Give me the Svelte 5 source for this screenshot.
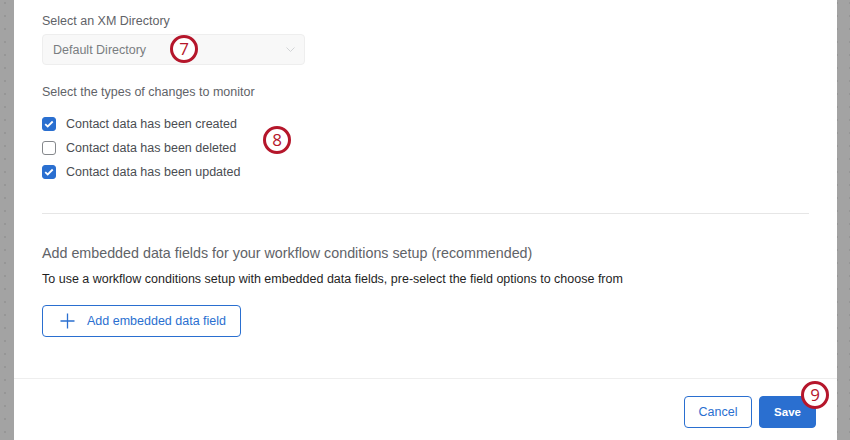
<script>
	let types = [
		{ label: 'Contact data has been created', checked: true },
		{ label: 'Contact data has been deleted', checked: false },
		{ label: 'Contact data has been updated', checked: true }
	];
</script>

<div class="backdrop">
	<div class="modal">
		<div class="modal__main">
			<label class="field-label" for="directory">Select an XM Directory</label>
			<div class="select" id="directory">
				<span>Default Directory</span>
				<svg width="9" height="6" viewBox="0 0 9 6" fill="none" stroke="#d2d4d6" stroke-width="1">
					<path d="M0.5 0.5l4 4 4-4" />
				</svg>
				<span class="step step--seven">7</span>
			</div>

			<p class="field-label field-label--types">Select the types of changes to monitor</p>
			<div class="checks">
				{#each types as type}
					<div class="check">
						<span class="box" class:box--on={type.checked}>
							{#if type.checked}
								<svg width="10" height="8" viewBox="0 0 10 8" fill="none" stroke="#fff" stroke-width="1.8">
									<path d="M1.2 4.2l2.5 2.3 5-5" />
								</svg>
							{/if}
						</span>
						{type.label}
					</div>
				{/each}
				<span class="step step--eight">8</span>
			</div>

			<hr />

			<h2>Add embedded data fields for your workflow conditions setup (recommended)</h2>
			<p class="hint">To use a workflow conditions setup with embedded data fields, pre-select the field options to choose from</p>
			<button class="btn btn--outline btn--add">
				<svg class="plus" width="15" height="16" viewBox="0 0 15 16" fill="none" stroke="#2a6fd0" stroke-width="1.3">
					<path d="M7.5 0.5v15M0.5 8h14" />
				</svg>
				Add embedded data field
			</button>
		</div>
		<div class="modal__footer">
			<button class="btn btn--outline">Cancel</button>
			<button class="btn btn--primary">
				Save
				<span class="step step--nine">9</span>
			</button>
		</div>
	</div>
</div>

<style>
	:global(body) {
		margin: 0;
	}

	.backdrop {
		width: 850px;
		height: 440px;
		overflow: hidden;
		padding: 0 13px 0 14px;
		box-sizing: border-box;
		background-color: #a3a3a3;
		background-image: radial-gradient(circle at 5px 3px, #969696 1px, transparent 1.2px);
		background-size: 13px 13px;
		font-family: 'Liberation Sans', Arial, sans-serif;
		font-size: 12.5px;
	}

	.modal {
		height: 100%;
		background: #fff;
		display: flex;
		flex-direction: column;
	}

	.modal__main {
		flex: 1;
		padding: 15px 28px 0;
	}

	.modal__footer {
		height: 62px;
		box-sizing: border-box;
		border-top: 1px solid #eeeeee;
		padding: 17px 21px 0 0;
		display: flex;
		justify-content: flex-end;
		gap: 7px;
	}

	.field-label {
		display: block;
		margin: 0;
		height: 13px;
		line-height: 13px;
		color: #5f6368;
	}

	.field-label--types {
		margin-top: 21px;
	}

	.select {
		position: relative;
		margin-top: 6px;
		width: 263px;
		height: 31px;
		box-sizing: border-box;
		padding: 0 9px 0 10px;
		display: flex;
		align-items: center;
		justify-content: space-between;
		background: #f8f8f8;
		border: 1px solid #eeeeee;
		border-radius: 4px;
		color: #7a7d81;
	}

	.checks {
		position: relative;
		margin-top: 18px;
		display: flex;
		flex-direction: column;
		gap: 10px;
	}

	.check {
		display: flex;
		align-items: center;
		gap: 10px;
		height: 14px;
		color: #4a4d52;
	}

	.box {
		width: 14px;
		height: 14px;
		box-sizing: border-box;
		border: 1px solid #85888c;
		border-radius: 3px;
		display: flex;
		align-items: center;
		justify-content: center;
	}

	.box--on {
		background: #2a6fd0;
		border-color: #2a6fd0;
	}

	hr {
		margin: 34px 0 0;
		border: 0;
		border-top: 1px solid #e6e6e6;
	}

	h2 {
		margin: 31px 0 0;
		font-size: 14.3px;
		line-height: 16px;
		font-weight: 400;
		color: #5f6368;
	}

	.hint {
		margin: 11px 0 0;
		line-height: 14px;
		color: #1f1f1f;
	}

	.btn {
		position: relative;
		height: 32px;
		box-sizing: border-box;
		border-radius: 4px;
		font: inherit;
		display: flex;
		align-items: center;
		justify-content: center;
		padding: 0;
	}

	.btn--outline {
		width: 68px;
		background: #fff;
		border: 1px solid #2a6fd0;
		color: #2a6fd0;
	}

	.btn--primary {
		width: 57px;
		background: #2a6fd0;
		border: 1px solid #2a6fd0;
		color: #fff;
		font-size: 11.5px;
		font-weight: 700;
	}

	.btn--add {
		margin-top: 19px;
		width: 199px;
		padding-left: 3px;
		gap: 12px;
	}

	.step {
		position: absolute;
		width: 22px;
		height: 22px;
		border: 3px solid #b5162b;
		border-radius: 50%;
		background: #fff;
		color: #b5162b;
		font-family: 'Open Sans', sans-serif;
		font-size: 17px;
		font-weight: 400;
		line-height: 22px;
		text-align: center;
	}

	.step--seven {
		left: 127px;
		top: 0;
	}

	.step--eight {
		left: 221px;
		top: 9px;
	}

	.step--nine {
		left: 41px;
		top: -16px;
	}
</style>
